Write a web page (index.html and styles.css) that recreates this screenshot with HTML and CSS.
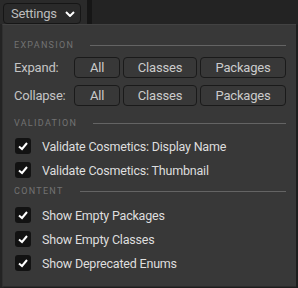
FILE: index.html
```html
<!DOCTYPE html>
<html lang="en">
<head>
  <meta charset="UTF-8">
  <title>Settings</title>
  <link rel="stylesheet" href="styles.css">
</head>
<body>
  <div class="toolbar">
    <button class="settings-btn">
      Settings
      <svg class="chevron" width="10" height="6" viewBox="0 0 10 6"><polyline points="1,1 5,5 9,1" fill="none" stroke="#fff" stroke-width="2"/></svg>
    </button>
    <div class="toolbar-gap"></div>
    <div class="toolbar-split"></div>
  </div>

  <div class="menu">
    <!-- expansion -->
    <div class="section-title"><span>EXPANSION</span><i></i></div>
    <div class="expand-grid">
      <div class="row-label">Expand:</div>
      <div class="btn-group">
        <button class="menu-btn btn-all">All</button>
        <button class="menu-btn btn-classes">Classes</button>
        <button class="menu-btn btn-packages">Packages</button>
      </div>
      <div class="row-label">Collapse:</div>
      <div class="btn-group">
        <button class="menu-btn btn-all">All</button>
        <button class="menu-btn btn-classes">Classes</button>
        <button class="menu-btn btn-packages">Packages</button>
      </div>
    </div>

    <!-- validation -->
    <div class="section-title validation"><span>VALIDATION</span><i></i></div>
    <ul class="check-list">
      <li><span class="check"><svg width="16" height="16" viewBox="0 0 16 16"><polyline points="4,8.5 7,11 12,5" fill="none" stroke="#fff" stroke-width="2"/></svg></span>Validate Cosmetics: Display Name</li>
      <li><span class="check"><svg width="16" height="16" viewBox="0 0 16 16"><polyline points="4,8.5 7,11 12,5" fill="none" stroke="#fff" stroke-width="2"/></svg></span>Validate Cosmetics: Thumbnail</li>
    </ul>

    <!-- content -->
    <div class="section-title content"><span>CONTENT</span><i></i></div>
    <ul class="check-list content-list">
      <li><span class="check"><svg width="16" height="16" viewBox="0 0 16 16"><polyline points="4,8.5 7,11 12,5" fill="none" stroke="#fff" stroke-width="2"/></svg></span>Show Empty Packages</li>
      <li><span class="check"><svg width="16" height="16" viewBox="0 0 16 16"><polyline points="4,8.5 7,11 12,5" fill="none" stroke="#fff" stroke-width="2"/></svg></span>Show Empty Classes</li>
      <li><span class="check"><svg width="16" height="16" viewBox="0 0 16 16"><polyline points="4,8.5 7,11 12,5" fill="none" stroke="#fff" stroke-width="2"/></svg></span>Show Deprecated Enums</li>
    </ul>
  </div>
</body>
</html>
```

FILE: styles.css
```css
* {margin: 0; padding: 0; box-sizing: border-box;}
body {
  background-color: #232323;
  font-family: Roboto, "Liberation Sans", sans-serif;
  font-size: 12.5px;
  letter-spacing: -0.2px;
  color: #c8c8c8;
  width: 298px;
  height: 288px;
  overflow: hidden;
}
button {
  font-family: inherit;
  font-size: 12.5px;
  letter-spacing: inherit;
  color: inherit;
  cursor: pointer;
}
.toolbar {
  display: flex;
  height: 24px;
  background-color: #2a2a2a;
}
.settings-btn {
  display: flex;
  align-items: center;
  gap: 8px;
  margin: 3px 0 0 3px;
  width: 78px;
  height: 21px;
  padding-left: 7px;
  background-color: #2a2a2a;
  border: 1px solid #161616;
  border-radius: 4px;
  color: #bdbdbd;
  font-size: 13px;
}
.toolbar-gap {
  width: 6px;
}
.toolbar-split {
  width: 5px;
  background-color: #161616;
}
.toolbar::after {
  content: "";
  flex: 1;
  background-color: #232323;
}
.menu {
  margin-left: 2px;
  width: 294px;
  height: 263px;
  padding: 12px 10px 0 11px;
  background-color: #383838;
  border-top: 1px solid #424242;
  border-left: 1px solid #303030;
  border-bottom: 1px solid #2c2c2c;
  box-shadow: 2px 1px 0 #1e1e1e;
}
.section-title {
  display: flex;
  align-items: center;
  gap: 16px;
  height: 16px;
  font-size: 9px;
  letter-spacing: 1.3px;
  color: #727272;
}
.section-title i {
  flex: 1;
  height: 1px;
  background-color: #646464;
}
.expand-grid {
  display: grid;
  grid-template-columns: 60px auto;
  row-gap: 7px;
  align-items: center;
  margin-top: 4px;
}
.row-label {
  font-size: 13px;
  color: #c4c4c4;
}
.btn-group {
  display: flex;
  gap: 3px;
}
.menu-btn {
  height: 21px;
  background-color: #383838;
  border: 1px solid #1a1a1a;
  border-radius: 4px;
  color: #cbcbcb;
  font-size: 13px;
}
.btn-all {width: 46px;}
.btn-classes {width: 74px;}
.btn-packages {width: 86px;}
.validation {
  margin-top: 9px;
}
.check-list {
  list-style: none;
  margin-top: 3px;
}
.check-list li {
  display: flex;
  align-items: center;
  gap: 11px;
  height: 24px;
  padding-left: 1px;
  color: #dedede;
}
.check {
  display: block;
  width: 16px;
  height: 16px;
  border-radius: 3px;
  background-color: #121212;
}
.check svg {display: block;}
.content {
  margin-top: 1px;
}
.content-list {
  margin-top: 4px;
}
```
